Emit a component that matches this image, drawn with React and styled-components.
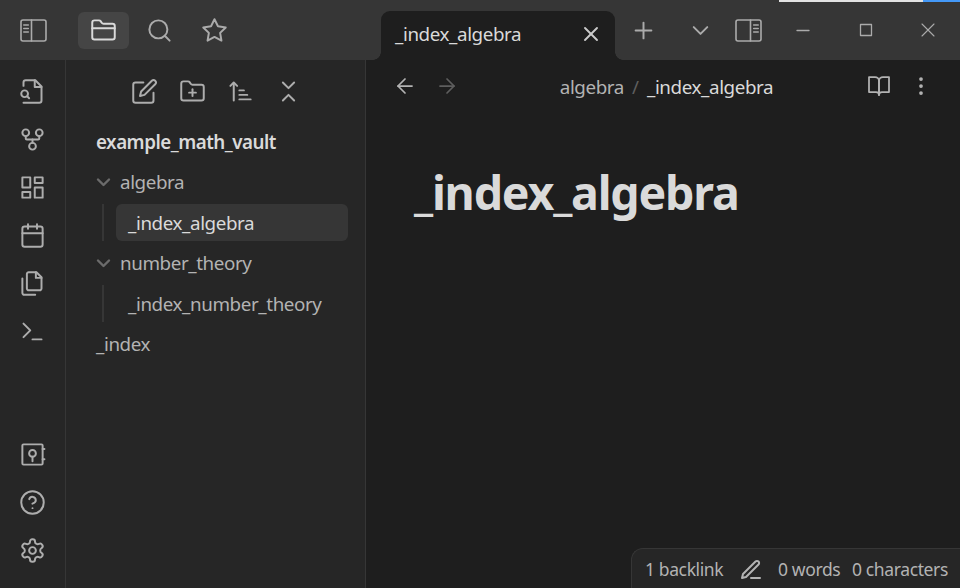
import React from 'react';
import styled, { createGlobalStyle } from 'styled-components';

const Global = createGlobalStyle`
  * { box-sizing: border-box; }
  body { margin: 0; background: #1e1e1e; overflow: hidden; }
`;

const Svg = styled.svg`
  display: block;
  flex: none;
  width: ${p => p.$w || 27}px;
  height: ${p => p.$h || p.$w || 27}px;
  fill: none;
  stroke: currentColor;
  stroke-width: ${p => p.$stroke || 1.75};
  stroke-linecap: round;
  stroke-linejoin: round;
`;

const PATHS = {
  folder: ['M4 20h16a2 2 0 0 0 2-2V8a2 2 0 0 0-2-2h-7.93a2 2 0 0 1-1.66-.9l-.82-1.2A2 2 0 0 0 7.93 3H4a2 2 0 0 0-2 2v13c0 1.1.9 2 2 2Z', 'M2 10h20'],
  search: ['M11 3a8 8 0 1 0 0 16a8 8 0 1 0 0-16', 'm21 21-4.3-4.3'],
  star: ['M12 2l3.09 6.26L22 9.27l-5 4.87 1.18 6.88L12 17.77l-6.18 3.25L7 14.14 2 9.27l6.91-1.01z'],
  fileSearch: ['M4 22h14a2 2 0 0 0 2-2V7.5L14.5 2H6a2 2 0 0 0-2 2v3', 'M14 2v6h6', 'M5 17a3 3 0 1 0 0-6 3 3 0 0 0 0 6z', 'm9 18-1.5-1.5'],
  fork: ['M12 15a3 3 0 1 0 0 6a3 3 0 1 0 0-6', 'M6 3a3 3 0 1 0 0 6a3 3 0 1 0 0-6', 'M18 3a3 3 0 1 0 0 6a3 3 0 1 0 0-6', 'M18 9v2c0 .6-.4 1-1 1H7c-.6 0-1-.4-1-1V9', 'M12 12v3'],
  dashboard: ['M3 3h7v9H3z', 'M14 3h7v5h-7z', 'M14 12h7v9h-7z', 'M3 16h7v5H3z'],
  calendar: ['M5 4h14a2 2 0 0 1 2 2v14a2 2 0 0 1-2 2H5a2 2 0 0 1-2-2V6a2 2 0 0 1 2-2z', 'M16 2v4', 'M8 2v4', 'M3 10h18'],
  files: ['M15.5 2H8.6c-.4 0-.8.2-1.1.5-.3.3-.5.7-.5 1.1v12.8c0 .4.2.8.5 1.1.3.3.7.5 1.1.5h9.8c.4 0 .8-.2 1.1-.5.3-.3.5-.7.5-1.1V6.5L15.5 2z', 'M3 7.6v12.8c0 .4.2.8.5 1.1.3.3.7.5 1.1.5h9.8', 'M15 2v5h5'],
  terminal: ['m4 17 6-6-6-6', 'M12 19h8'],
  vault: ['M4 3h16a1 1 0 0 1 1 1v16a1 1 0 0 1-1 1H4a1 1 0 0 1-1-1V4a1 1 0 0 1 1-1z', 'M12 8a3 3 0 1 0 0 6a3 3 0 1 0 0-6', 'M12 14v4', 'M21 7.2h1.6', 'M21 16.2h1.6'],
  help: ['M12 2a10 10 0 1 0 0 20a10 10 0 1 0 0-20', 'M9.09 9a3 3 0 0 1 5.83 1c0 2-3 3-3 3', 'M12 17h.01'],
  settings: ['M12.22 2h-.44a2 2 0 0 0-2 2v.18a2 2 0 0 1-1 1.73l-.43.25a2 2 0 0 1-2 0l-.15-.08a2 2 0 0 0-2.73.73l-.22.38a2 2 0 0 0 .73 2.73l.15.1a2 2 0 0 1 1 1.72v.51a2 2 0 0 1-1 1.74l-.15.09a2 2 0 0 0-.73 2.73l.22.38a2 2 0 0 0 2.73.73l.15-.08a2 2 0 0 1 2 0l.43.25a2 2 0 0 1 1 1.73V20a2 2 0 0 0 2 2h.44a2 2 0 0 0 2-2v-.18a2 2 0 0 1 1-1.73l.43-.25a2 2 0 0 1 2 0l.15.08a2 2 0 0 0 2.73-.73l.22-.39a2 2 0 0 0-.73-2.73l-.15-.08a2 2 0 0 1-1-1.74v-.5a2 2 0 0 1 1-1.74l.15-.09a2 2 0 0 0 .73-2.73l-.22-.38a2 2 0 0 0-2.73-.73l-.15.08a2 2 0 0 1-2 0l-.43-.25a2 2 0 0 1-1-1.73V4a2 2 0 0 0-2-2z', 'M12 9a3 3 0 1 0 0 6a3 3 0 1 0 0-6'],
  edit: ['M11 4H4a2 2 0 0 0-2 2v14a2 2 0 0 0 2 2h14a2 2 0 0 0 2-2v-7', 'M18.5 2.5a2.121 2.121 0 0 1 3 3L12 15l-4 1 1-4 9.5-9.5z'],
  folderPlus: ['M4 20h16a2 2 0 0 0 2-2V8a2 2 0 0 0-2-2h-7.93a2 2 0 0 1-1.66-.9l-.82-1.2A2 2 0 0 0 7.93 3H4a2 2 0 0 0-2 2v13c0 1.1.9 2 2 2Z', 'M12 10v6', 'M9 13h6'],
  sort: ['M11 11h4', 'M11 15h7', 'M11 19h10', 'M9 7 6 4 3 7', 'M6 6v14'],
  collapse: ['m7 20 5-5 5 5', 'm7 4 5 5 5-5'],
  close: ['M18 6 6 18', 'm6 6 12 12'],
  plus: ['M12 5v14', 'M5 12h14'],
  chevron: ['m6 9 6 6 6-6'],
  back: ['m12 19-7-7 7-7', 'M19 12H5'],
  forward: ['M5 12h14', 'm12 5 7 7-7 7'],
  book: ['M2 3h6a4 4 0 0 1 4 4v14a3 3 0 0 0-3-3H2z', 'M22 3h-6a4 4 0 0 0-4 4v14a3 3 0 0 1 3-3h7z'],
  more: ['M12 4a1 1 0 1 0 0 2a1 1 0 1 0 0-2', 'M12 11a1 1 0 1 0 0 2a1 1 0 1 0 0-2', 'M12 18a1 1 0 1 0 0 2a1 1 0 1 0 0-2'],
  pencil: ['M12 20h9', 'M16.5 3.5a2.121 2.121 0 0 1 3 3L7 19l-4 1 1-4L16.5 3.5z'],
};

const Icon = ({ name, size, stroke }) => (
  <Svg viewBox="0 0 24 24" $w={size} $stroke={stroke}>
    {PATHS[name].map(d => <path key={d} d={d} />)}
  </Svg>
);

const PanelIcon = ({ side }) => {
  const left = side === 'left';
  const x = left ? 3.8 : 18.7;
  return (
    <Svg viewBox="0 0 27 23" $w={27} $h={23} $stroke={1.6}>
      <rect x="1" y="1" width="25" height="21" rx="2" />
      <path d={left ? 'M11.5 1v21' : 'M15.5 1v21'} />
      <path d={`M${x} 6h4.5M${x} 9.5h4.5M${x} 13h4.5`} />
    </Svg>
  );
};

const Window = styled.div`
  width: 960px;
  height: 588px;
  display: grid;
  grid-template-rows: 60px 528px;
  position: relative;
  background: #1e1e1e;
  color: #b3b3b3;
  font-family: "Noto Sans", "Open Sans", sans-serif;
  font-size: 18.8px;
  line-height: 1;
  white-space: nowrap;
  overflow: hidden;
`;

const TitleBar = styled.header`
  display: flex;
  height: 60px;
  background: #363636;
  color: #ababab;
`;

const SideHeader = styled.div`
  width: 366px;
  height: 60px;
  display: flex;
  align-items: center;
  padding-left: 20px;
`;

const SideTabs = styled.div`
  display: flex;
  gap: 4.5px;
  margin-left: 31px;
`;

const SideTab = styled.div`
  width: 51px;
  height: 37px;
  border-radius: 6px;
  display: grid;
  place-items: center;
  color: ${p => (p.$active ? '#dadada' : '#ababab')};
  background: ${p => (p.$active ? '#454545' : 'transparent')};
`;

const Tab = styled.div`
  position: relative;
  width: 234px;
  height: 49px;
  margin: 11px 0 0 15px;
  padding: 0 12px 4px 14px;
  display: flex;
  align-items: center;
  justify-content: space-between;
  border-radius: 9px 9px 0 0;
  background: #1e1e1e;
  color: #dadada;
  &::before, &::after {
    content: '';
    position: absolute;
    bottom: 0;
    width: 8px;
    height: 8px;
  }
  &::before {
    left: -8px;
    background: radial-gradient(circle at 0 0, transparent 7.5px, #1e1e1e 8px);
  }
  &::after {
    right: -8px;
    background: radial-gradient(circle at 100% 0, transparent 7.5px, #1e1e1e 8px);
  }
`;

const TitleActions = styled.div`
  flex: 1;
  height: 60px;
  display: grid;
  grid-template-columns: 57px 57px 39px 69px 57px 68px;
  align-items: center;
  justify-items: center;
`;

const LoadTrack = styled.div`
  position: absolute;
  top: 0;
  right: 0;
  width: 181px;
  height: 2px;
  display: flex;
  background: #e3e3e3;
  justify-content: flex-end;
`;

const LoadEnd = styled.div`
  width: 37px;
  background: #4499f8;
`;

const Body = styled.div`
  display: grid;
  grid-template-columns: 66px 300px 594px;
`;

const Ribbon = styled.nav`
  display: flex;
  flex-direction: column;
  justify-content: space-between;
  padding: 18px 0 24px 19px;
  background: #262626;
  color: #adadad;
  border-right: 1px solid #363636;
`;

const RibbonGroup = styled.div`
  display: flex;
  flex-direction: column;
  gap: 21px;
`;

const Explorer = styled.aside`
  background: #262626;
  border-right: 1px solid #363636;
`;

const ExplorerTools = styled.div`
  display: flex;
  gap: 21px;
  padding: 18px 0 0 65px;
  color: #adadad;
`;

const Tree = styled.div`
  display: flex;
  flex-direction: column;
  gap: 3.5px;
  padding: 18px 17px 0 30px;
`;

const Text = styled.span`
  letter-spacing: -0.4px;
`;

const TabTitle = styled(Text)`
  padding-top: 2px;
`;

const VaultName = styled.div`
  height: 37px;
  display: flex;
  align-items: center;
  padding-top: 2px;
  font-weight: 600;
  letter-spacing: -0.5px;
  color: #dadada;
`;

const TreeRow = styled.div`
  height: 37px;
  display: flex;
  align-items: center;
`;

const Arrow = styled.span`
  width: 24px;
  color: #6b6b6b;
`;

const Children = styled.div`
  margin-left: 6px;
  padding-left: 12px;
  border-left: 2px solid #363636;
`;

const FileRow = styled(TreeRow)`
  padding: 1px 0 0 12px;
  border-radius: 6px;
  color: ${p => (p.$active ? '#dadada' : '#b3b3b3')};
  background: ${p => (p.$active ? '#363636' : 'transparent')};
`;

const Pane = styled.main`
  display: grid;
  grid-template-rows: 52px 1fr 40px;
`;

const ViewHeader = styled.div`
  display: grid;
  grid-template-columns: 85px 1fr 66px;
  align-items: center;
  padding: 0 27px;
`;

const IconPair = styled.div`
  display: flex;
  gap: 18px;
`;

const Dim = styled.span`
  display: block;
  color: ${p => p.$c || '#5e5e5e'};
`;

const Crumbs = styled.div`
  display: flex;
  justify-content: center;
  gap: 8px;
  padding: 2px 12px 0 0;
`;

const Strong = styled(Text)`
  color: #dadada;
`;

const Note = styled.article`
  padding: 55px 0 0 48px;
`;

const Heading = styled.h1`
  margin: 0;
  font-size: 46.5px;
  line-height: 50px;
  font-weight: 700;
  color: #dadada;
  letter-spacing: -1.2px;
`;

const StatusBar = styled.footer`
  justify-self: end;
  width: 329px;
  height: 40px;
  display: flex;
  align-items: center;
  padding: 2px 0 0 13px;
  font-size: 17.5px;
  background: #262626;
  border: 1px solid #363636;
  border-width: 1px 0 0 1px;
  border-radius: 12px 0 0 0;
`;

const StatusItem = styled.span`
  width: ${p => p.$w}px;
  letter-spacing: -0.38px;
`;

const RIBBON_TOP = ['fileSearch', 'fork', 'dashboard', 'calendar', 'files', 'terminal'];
const RIBBON_BOTTOM = ['vault', 'help', 'settings'];

const Folder = ({ name, children }) => (
  <>
    <TreeRow>
      <Arrow>
        <Svg viewBox="0 0 15 10" $w={15} $h={10} $stroke={2.4}><path d="m2 2.5 5.5 5.5L13 2.5" /></Svg>
      </Arrow>
      <Text>{name}</Text>
    </TreeRow>
    <Children>{children}</Children>
  </>
);

export default function App() {
  return (
    <Window>
      <Global />
      <TitleBar>
        <SideHeader>
          <PanelIcon side="left" />
          <SideTabs>
            <SideTab $active><Icon name="folder" /></SideTab>
            <SideTab><Icon name="search" /></SideTab>
            <SideTab><Icon name="star" /></SideTab>
          </SideTabs>
        </SideHeader>
        <Tab>
          <TabTitle>_index_algebra</TabTitle>
          <Dim $c="#cacaca"><Icon name="close" size={24} stroke={1.9} /></Dim>
        </Tab>
        <TitleActions>
          <Icon name="plus" />
          <Icon name="chevron" />
          <PanelIcon side="right" />
          <Svg viewBox="0 0 14 14" $w={14} $stroke={1.3}><path d="M1 7.5h12" /></Svg>
          <Svg viewBox="0 0 14 14" $w={14} $stroke={1.3}><path d="M1.5 1.5h11v11h-11z" /></Svg>
          <Svg viewBox="0 0 14 14" $w={14} $stroke={1.1}><path d="m1 1 12 12M13 1 1 13" /></Svg>
        </TitleActions>
      </TitleBar>
      <LoadTrack><LoadEnd /></LoadTrack>
      <Body>
        <Ribbon>
          <RibbonGroup>{RIBBON_TOP.map(n => <Icon key={n} name={n} />)}</RibbonGroup>
          <RibbonGroup>{RIBBON_BOTTOM.map(n => <Icon key={n} name={n} />)}</RibbonGroup>
        </Ribbon>
        <Explorer>
          <ExplorerTools>
            <Icon name="edit" />
            <Icon name="folderPlus" />
            <Icon name="sort" />
            <Icon name="collapse" />
          </ExplorerTools>
          <Tree>
            <VaultName>example_math_vault</VaultName>
            <Folder name="algebra"><FileRow $active><Text>_index_algebra</Text></FileRow></Folder>
            <Folder name="number_theory"><FileRow><Text>_index_number_theory</Text></FileRow></Folder>
            <TreeRow><Text>_index</Text></TreeRow>
          </Tree>
        </Explorer>
        <Pane>
          <ViewHeader>
            <IconPair>
              <Icon name="back" size={24} />
              <Dim><Icon name="forward" size={24} /></Dim>
            </IconPair>
            <Crumbs>
              <Text>algebra</Text>
              <Dim>/</Dim>
              <Strong>_index_algebra</Strong>
            </Crumbs>
            <IconPair>
              <Icon name="book" size={24} />
              <Icon name="more" size={24} />
            </IconPair>
          </ViewHeader>
          <Note><Heading>_index_algebra</Heading></Note>
          <StatusBar>
            <StatusItem $w={94}>1 backlink</StatusItem>
            <StatusItem $w={39}><Icon name="pencil" size={24} stroke={2} /></StatusItem>
            <StatusItem $w={74}>0 words</StatusItem>
            <StatusItem $w={100}>0 characters</StatusItem>
          </StatusBar>
        </Pane>
      </Body>
    </Window>
  );
}
